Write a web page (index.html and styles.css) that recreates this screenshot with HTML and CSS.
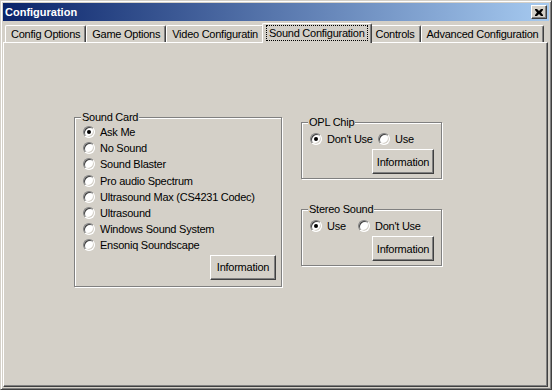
FILE: index.html
```html
<!DOCTYPE html>
<html lang="en">
<head>
    <meta charset="UTF-8">
    <title>Configuration</title>
    <link rel="stylesheet" href="styles.css">
</head>
<body>
<div class="window">
    <div class="titlebar">
        <span class="title">Configuration</span>
        <button class="close" type="button">
            <svg width="8" height="7" viewBox="0 0 8 7">
                <path d="M0 0h2l2 2 2-2h2v1l-2 2.5 2 2.5v1h-2l-2-2-2 2h-2v-1l2-2.5-2-2.5z" fill="#000"/>
            </svg>
        </button>
    </div>

    <div class="tabs">
        <div class="tab">Config Options</div>
        <div class="tab">Game Options</div>
        <div class="tab">Video Configuratin</div>
        <div class="tab active"><span class="focus">Sound Configuration</span></div>
        <div class="tab">Controls</div>
        <div class="tab">Advanced Configuration</div>
    </div>

    <div class="panel">
        <fieldset class="group sound-card">
            <legend>Sound Card</legend>
            <label class="radio"><span class="circle checked"></span>Ask Me</label>
            <label class="radio"><span class="circle"></span>No Sound</label>
            <label class="radio"><span class="circle"></span>Sound Blaster</label>
            <label class="radio"><span class="circle"></span>Pro audio Spectrum</label>
            <label class="radio"><span class="circle"></span>Ultrasound Max (CS4231 Codec)</label>
            <label class="radio"><span class="circle"></span>Ultrasound</label>
            <label class="radio"><span class="circle"></span>Windows Sound System</label>
            <label class="radio"><span class="circle"></span>Ensoniq Soundscape</label>
            <div class="actions">
                <button class="btn wide" type="button">Information</button>
            </div>
        </fieldset>

        <div class="side">
            <fieldset class="group small">
                <legend>OPL Chip</legend>
                <div class="choices">
                    <label class="radio opl-first"><span class="circle checked"></span>Don't Use</label>
                    <label class="radio"><span class="circle"></span>Use</label>
                </div>
                <div class="actions">
                    <button class="btn" type="button">Information</button>
                </div>
            </fieldset>

            <fieldset class="group small">
                <legend>Stereo Sound</legend>
                <div class="choices">
                    <label class="radio stereo-first"><span class="circle checked"></span>Use</label>
                    <label class="radio"><span class="circle"></span>Don't Use</label>
                </div>
                <div class="actions">
                    <button class="btn" type="button">Information</button>
                </div>
            </fieldset>
        </div>
    </div>
</div>
</body>
</html>
```

FILE: styles.css
```css
/* Global */
body {
    margin: 0;
    background-color: #d4d0c8;
    font-family: 'Liberation Sans', Arial, sans-serif;
    font-size: 11px;
    letter-spacing: -0.25px;
    color: #000;
}

/* Window frame */
.window {
    box-sizing: border-box;
    width: 552px;
    height: 390px;
    padding: 2px;
    border: 1px solid;
    border-color: #d4d0c8 #404040 #404040 #d4d0c8;
    box-shadow: inset 1px 1px 0 #ffffff, inset -1px -1px 0 #808080;
    display: flex;
    flex-direction: column;
}

/* Title bar */
.titlebar {
    height: 18px;
    display: flex;
    align-items: center;
    justify-content: space-between;
    padding: 0 2px 0 2px;
    background: linear-gradient(to right, #0a246a, #a6caf0);
}

.title {
    color: #ffffff;
    font-weight: bold;
    font-size: 11px;
    letter-spacing: 0;
}

.close {
    box-sizing: border-box;
    width: 16px;
    height: 14px;
    padding: 0;
    margin: 0;
    display: flex;
    align-items: center;
    justify-content: center;
    background-color: #d4d0c8;
    border: 1px solid;
    border-color: #ffffff #404040 #404040 #ffffff;
    box-shadow: inset -1px -1px 0 #808080;
}

/* Tabs */
.tabs {
    display: flex;
    align-items: flex-end;
    height: 19px;
    margin-top: 2px;
    padding-left: 2px;
    position: relative;
    z-index: 1;
}

.tab {
    box-sizing: border-box;
    height: 17px;
    padding: 0 5px;
    display: flex;
    align-items: center;
    white-space: nowrap;
    border-top: 1px solid #ffffff;
    border-left: 1px solid #ffffff;
    border-right: 1px solid #404040;
    border-radius: 2px 2px 0 0;
    box-shadow: inset -1px 0 0 #808080;
}

.tab.active {
    height: 20px;
    margin: 0 -2px -1px -2px;
    padding: 0 4px 2px 4px;
    background-color: #d4d0c8;
    position: relative;
}

.focus {
    padding: 1px 2px;
    outline: 1px dotted #000;
    outline-offset: 0;
}

/* Panel */
.panel {
    flex: 1;
    margin-right: 1px;
    padding: 68px 0 0 70px;
    display: flex;
    align-items: flex-start;
    gap: 19px;
    border: 1px solid;
    border-color: #ffffff #404040 #404040 #ffffff;
    box-shadow: inset -1px -1px 0 #808080;
}

/* Group boxes */
.group {
    box-sizing: border-box;
    margin: 0;
    padding: 0 5px 6px 8px;
    border: 1px solid #808080;
    box-shadow: 1px 1px 0 #ffffff, inset 1px 1px 0 #ffffff;
}

.group legend {
    margin-left: -2px;
    padding: 0 1px;
    line-height: 13px;
    background-color: #d4d0c8;
}

.sound-card {
    width: 208px;
}

.sound-card .radio {
    height: 16.2px;
}

.sound-card .actions {
    margin-top: 1px;
}

.side {
    margin-top: 5px;
    display: flex;
    flex-direction: column;
    gap: 24px;
}

.group.small {
    width: 141px;
    padding: 2px 7px 4px 8px;
}

.choices {
    display: flex;
}

.opl-first {
    width: 68px;
}

.stereo-first {
    width: 48px;
}

/* Radio buttons */
.radio {
    height: 16px;
    display: flex;
    align-items: center;
    gap: 5px;
    white-space: nowrap;
}

.circle {
    box-sizing: border-box;
    width: 12px;
    height: 12px;
    flex: none;
    border-radius: 50%;
    border: 1px solid;
    border-color: #808080 #ffffff #ffffff #808080;
    box-shadow: inset 1px 1px 0 #404040, inset -1px -1px 0 #d4d0c8;
    background-color: #ffffff;
    display: flex;
    align-items: center;
    justify-content: center;
}

.circle.checked::after {
    content: "";
    width: 4px;
    height: 4px;
    border-radius: 50%;
    background-color: #000;
}

/* Buttons */
.actions {
    display: flex;
    justify-content: flex-end;
    margin-top: 2px;
}

.btn {
    box-sizing: border-box;
    width: 62px;
    height: 25px;
    padding: 0;
    font-family: inherit;
    font-size: 11px;
    letter-spacing: -0.25px;
    color: #000;
    background-color: #d4d0c8;
    border: 1px solid;
    border-color: #ffffff #404040 #404040 #ffffff;
    box-shadow: inset -1px -1px 0 #808080;
}

.btn.wide {
    width: 66px;
}
```
